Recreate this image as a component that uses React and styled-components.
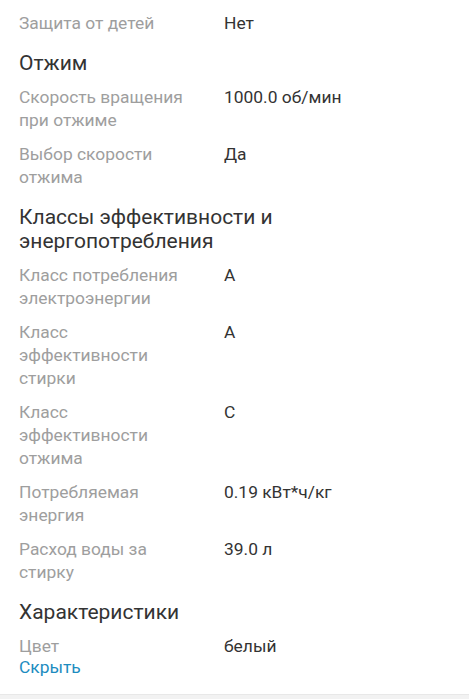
import React from "react";
import styled, { createGlobalStyle } from "styled-components";

const GlobalStyle = createGlobalStyle`
  html, body {
    margin: 0;
    padding: 0;
    background: #fff;
  }
  body {
    font-family: Roboto, "Noto Sans", Arial, sans-serif;
    -webkit-font-smoothing: antialiased;
  }
`;

const specs = [
  {
    rows: [{ label: "Защита от детей", value: "Нет" }],
  },
  {
    title: "Отжим",
    rows: [
      { label: "Скорость вращения при отжиме", value: "1000.0 об/мин" },
      { label: "Выбор скорости отжима", value: "Да" },
    ],
  },
  {
    title: "Классы эффективности и энергопотребления",
    rows: [
      { label: "Класс потребления электроэнергии", value: "A" },
      { label: "Класс эффективности стирки", value: "A" },
      { label: "Класс эффективности отжима", value: "C" },
      { label: "Потребляемая энергия", value: "0.19 кВт*ч/кг" },
      { label: "Расход воды за стирку", value: "39.0 л" },
    ],
  },
  {
    title: "Характеристики",
    rows: [{ label: "Цвет", value: "белый" }],
  },
];

function App() {
  return (
    <>
      <GlobalStyle />
      <Page>
        {specs.map((group, i) => (
          <Group key={i}>
            {group.title && <GroupTitle>{group.title}</GroupTitle>}
            {group.rows.map((row) => (
              <Row key={row.label}>
                <Label>{row.label}</Label>
                <Value>{row.value}</Value>
              </Row>
            ))}
          </Group>
        ))}
        <HideLink href="#">Скрыть</HideLink>
      </Page>
      <BottomBar />
    </>
  );
}

export default App;

const Page = styled.div`
  padding: 12px 19px 4px;
  width: 469px;
  box-sizing: border-box;
`;

const Group = styled.section`
  & + & {
    margin-top: 16px;
  }
`;

const GroupTitle = styled.h3`
  margin: 0 0 11px;
  font-size: 21px;
  font-weight: 400;
  line-height: 24px;
  color: #333;
  padding-right: 150px;
`;

const Row = styled.div`
  display: grid;
  grid-template-columns: 175px 1fr;
  column-gap: 30px;
  font-size: 17.4px;
  line-height: 23px;
  & + & {
    margin-top: 11px;
  }
`;

const Label = styled.div`
  color: #9e9e9e;
`;

const Value = styled.div`
  color: #333;
`;

const HideLink = styled.a`
  display: inline-block;
  margin-top: -1px;
  font-size: 17.4px;
  line-height: 21px;
  color: #1d8cbf;
  text-decoration: none;
`;

const BottomBar = styled.div`
  margin-top: 12px;
  height: 8px;
  background: #f2f2f2;
  border-top: 1px solid #e8e8e8;
`;
